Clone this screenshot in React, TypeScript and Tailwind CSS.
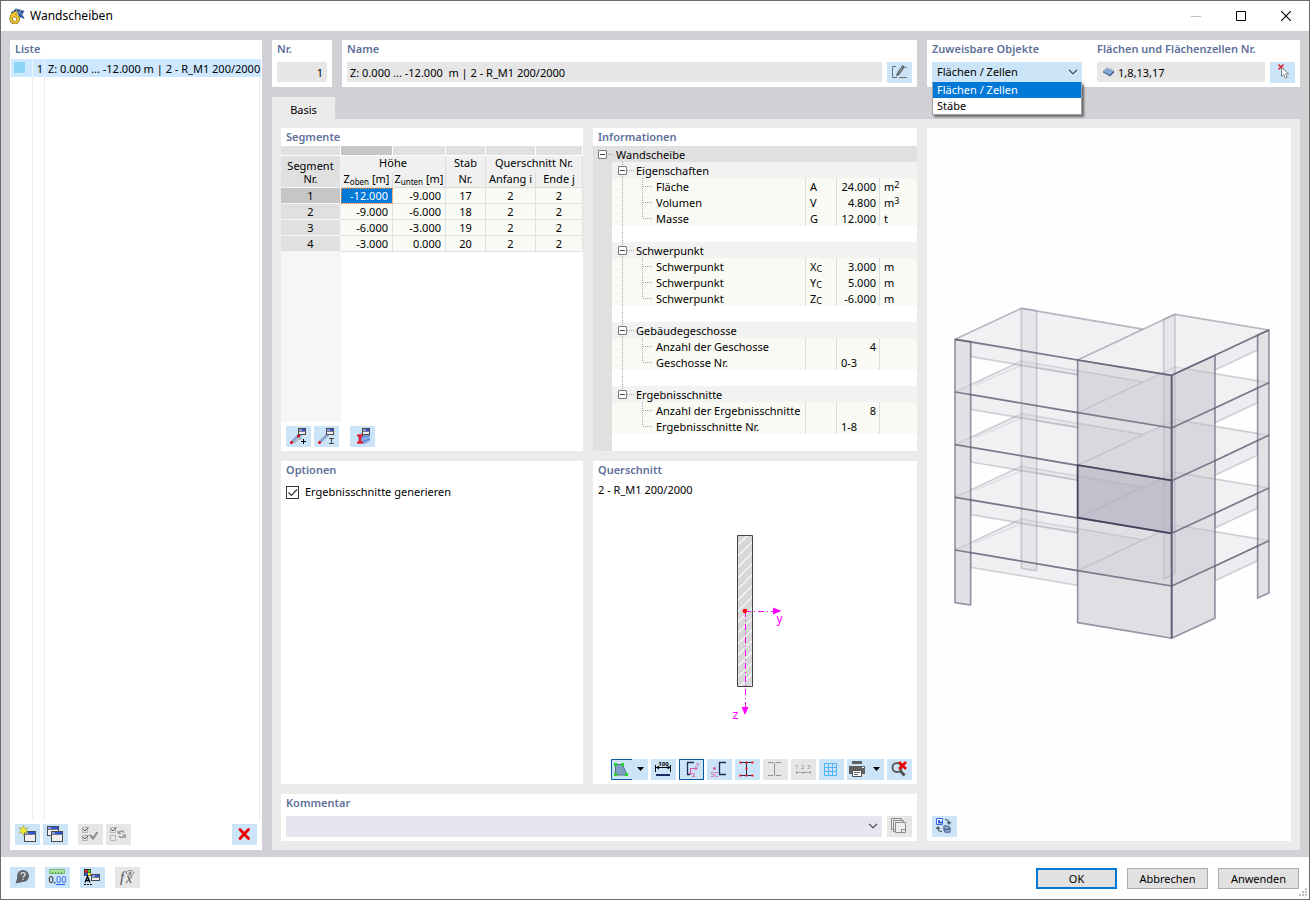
import type { ReactNode } from "react";
import { clsx } from "clsx";

type IconButtonProps = {
  label: string;
  children: ReactNode;
  disabled?: boolean;
  active?: boolean;
};

function IconButton({ label, children, disabled, active }: IconButtonProps) {
  return (
    <button
      type="button"
      aria-label={label}
      disabled={disabled}
      className={clsx(
        "block h-[21px] w-[25px] shrink-0",
        disabled ? "bg-[#e6e6e6]" : "bg-[#cce4f7]",
        active && "outline outline-1 -outline-offset-1 outline-[#0a5ba6]"
      )}
    >
      <svg viewBox="0 0 25 21" className="block h-[21px] w-[25px]" fill="none" aria-hidden>
        {children}
      </svg>
    </button>
  );
}

function SplitButton({ label, children, active }: IconButtonProps) {
  return (
    <button type="button" aria-label={label} className="flex h-[21px] w-[37px] shrink-0 bg-[#cce4f7]">
      <svg viewBox="0 0 37 21" className="block h-[21px] w-[37px]" fill="none" aria-hidden>
        {children}
        <path d="M26 8h7l-3.5 4z" fill="#000" />
        {active && <path d="M21 .5H.5v20H21" stroke="#0a5ba6" />}
      </svg>
    </button>
  );
}

function Heading({ children }: { children: ReactNode }) {
  return <h2 className="px-[5px] text-[11px] leading-[18px] font-semibold whitespace-nowrap text-[#60709a]">{children}</h2>;
}

function Chevron() {
  return (
    <svg viewBox="0 0 10 6" className="pointer-events-none absolute right-[4px] top-[7px] h-[6px] w-[10px]" fill="none" aria-hidden>
      <path d="M1 .8l4 4 4-4" stroke="#333" strokeWidth="1.1" />
    </svg>
  );
}

/* small window with a blue title bar, shared by several icons */
function MiniWindow({ x, y, w = 10, h = 9 }: { x: number; y: number; w?: number; h?: number }) {
  return (
    <g>
      <rect x={x + 0.5} y={y + 0.5} width={w} height={h} fill="#f1f1f1" stroke="#4a4a4a" />
      <rect x={x + 1} y={y + 1} width={w - 1} height="2" fill="#2f55dd" />
      <rect x={x + 1} y={y + 1} width="3" height="2" fill="#8a9be0" />
      <path d={`M${x} ${y + 3.5}h${w + 1}`} stroke="#5d5d66" strokeWidth=".8" />
    </g>
  );
}

function TitleBar() {
  return (
    <header className="flex h-[30px] items-center bg-white pl-[8px]">
      <svg viewBox="0 0 16 16" className="h-[16px] w-[16px]" fill="none" aria-hidden>
        <path d="M1.500 5L7 .5l8.500 2.500L13.500 6l2 5-5-2-2-4z" fill="#2f5891" />
        <path d="M4 3.500l7 1 3 4M8 1l-1 3M12 2l-2 3" stroke="#8fb0dc" strokeWidth=".8" />
        <path d="M8 4.300C4 5 2.200 7.500 2.200 11a3.500 3.500 0 1 0 3.500-3.400c-1.500 0-2.500 1-3 2" stroke="#6b5616" strokeWidth="3.400" />
        <path d="M8 4.300C4 5 2.200 7.500 2.200 11a3.500 3.500 0 1 0 3.500-3.400c-1.500 0-2.500 1-3 2" stroke="#f3c62c" strokeWidth="2.200" />
      </svg>
      <h1 className="ml-[5px] flex-1 text-[12px] text-black">Wandscheiben</h1>
      <button type="button" aria-label="Minimieren" className="grid h-[29px] w-[46px] place-items-center">
        <svg viewBox="0 0 10 10" className="h-[10px] w-[10px]" aria-hidden>
          <path d="M0 5.500h10" stroke="#c4c4c4" />
        </svg>
      </button>
      <button type="button" aria-label="Maximieren" className="grid h-[29px] w-[44px] place-items-center">
        <svg viewBox="0 0 10 10" className="h-[10px] w-[10px]" fill="none" aria-hidden>
          <path d="M.5.5h9v9h-9z" stroke="#000" />
        </svg>
      </button>
      <button type="button" aria-label="Schließen" className="grid h-[29px] w-[46px] place-items-center">
        <svg viewBox="0 0 10 10" className="h-[10px] w-[10px]" fill="none" aria-hidden>
          <path d="M0 0l10 10M10 0L0 10" stroke="#000" strokeWidth="1.100" />
        </svg>
      </button>
    </header>
  );
}

function ListPanel() {
  return (
    <aside className="flex w-[252px] shrink-0 flex-col bg-white">
      <Heading>Liste</Heading>
      <div className="mx-px mt-px flex flex-1 flex-col">
        <div className="flex h-[18px] items-stretch bg-[#cde8ff] leading-[19px]">
          <div className="w-[21px] px-[3px] pt-[3px]">
            <div className="h-[11px] w-[11px] bg-[#8dd5f4]" />
          </div>
          <div className="w-[12px] border-l border-white/60 pr-[1px] text-right">1</div>
          <div className="flex-1 whitespace-nowrap border-l border-white/60 pl-[3px]">
            Z: 0.000 ... -12.000 m | 2 - R_M1 200/2000
          </div>
        </div>
        <div className="flex flex-1">
          <div className="w-[21px]" />
          <div className="w-[12px] border-l border-[#ebebeb]" />
          <div className="mr-px flex-1 border-x border-[#ebebeb]" />
        </div>
      </div>
      <div className="flex items-center gap-[3px] px-[5px] pt-[5px] pb-[5px]">
        <IconButton label="Neu">
          <MiniWindow x={9} y={7} w={11} h={10} />
          <path d="M8.500 1.500l1.200 3.200 3.300-1-2.200 2.800 2.200 2.500-3.300-.8-1.200 3.300-1.200-3.300-3.300.8 2.200-2.500L4 3.700l3.300 1z" fill="#f7ef2d" stroke="#a8a03b" strokeWidth=".6" />
        </IconButton>
        <IconButton label="Kopieren">
          <MiniWindow x={4} y={2} w={11} h={9} />
          <MiniWindow x={8} y={7} w={11} h={10} />
        </IconButton>
        <span className="w-[4px]" />
        <IconButton label="Alle auswählen" disabled>
          <path d="M4.500 3.500h5v5h-5zM4.500 11.500h5v5h-5z" stroke="#b5b5b5" />
          <path d="M5 5l2 2 3.500-4M5 13l2 2 3.500-4" stroke="#555" />
          <path d="M12 11l3 3.500 4.500-6.500" stroke="#8a8a8a" strokeWidth="2" />
        </IconButton>
        <IconButton label="Auswahl umkehren" disabled>
          <path d="M4.500 3.500h5v5h-5z" stroke="#b5b5b5" />
          <path d="M4.500 11.500h5v5h-5z" stroke="#b5b5b5" />
          <path d="M5 5l2 2 3.500-4" stroke="#555" />
          <path d="M18 8.500c-1.500-2-3.500-2-5 0M13 12c1.500 2 3.500 2 5.500 0" stroke="#969696" strokeWidth="1.600" />
          <path d="M11.500 6v4h4zM20 14.500v-4h-4z" fill="#969696" />
        </IconButton>
        <span className="flex-1" />
        <IconButton label="Löschen">
          <path d="M8 5.500l8.500 9M16.500 5.500L8 14.500" stroke="#f00000" strokeWidth="2.800" strokeLinecap="round" />
        </IconButton>
      </div>
    </aside>
  );
}

function TopFields() {
  return (
    <div className="grid h-[47px] grid-cols-[60px_minmax(0,575fr)_minmax(0,373fr)] gap-[10px]">
      <section className="bg-white">
        <Heading>
          <label htmlFor="nr">Nr.</label>
        </Heading>
        <div className="px-[5px] pt-[4px]">
          <input id="nr" readOnly defaultValue="1" className="block h-[20px] w-full bg-[#e6e6e6] px-[4px] text-right" />
        </div>
      </section>

      <section className="bg-white">
        <Heading>
          <label htmlFor="name">Name</label>
        </Heading>
        <div className="flex gap-[5px] px-[5px] pt-[4px]">
          <input
            id="name"
            readOnly
            defaultValue="Z: 0.000 ... -12.000  m | 2 - R_M1 200/2000"
            className="block h-[20px] min-w-0 flex-1 bg-[#e6e6e6] px-[3px]"
          />
          <IconButton label="Name bearbeiten">
            <path d="M9 4.500H5.500v11H10M12 15.500h8M18 5.500h2" stroke="#6d7478" />
            <path d="M9 14.500l1-3.500 5.500-8 2.500 1.700-5.500 8z" fill="#5f666a" />
            <path d="M11.500 11.500l4-6" stroke="#9aa2a6" />
          </IconButton>
        </div>
      </section>

      <section className="flex gap-[10px] bg-white">
        <div className="w-[155px] shrink-0">
          <Heading>
            <label htmlFor="objects">Zuweisbare Objekte</label>
          </Heading>
          <div className="relative ml-[5px] mt-[4px]">
            <select id="objects" defaultValue="cells" className="block h-[20px] w-full appearance-none bg-[#cce4f7] px-[5px]">
              <option value="cells">Flächen / Zellen</option>
              <option value="members">Stäbe</option>
            </select>
            <Chevron />
            <ul
              role="listbox"
              aria-label="Zuweisbare Objekte"
              className="absolute top-full left-0 z-10 w-full border border-t-0 border-[#a0a0a0] bg-white leading-[16px] shadow-[2px_2px_2px_rgba(0,0,0,0.5)]"
            >
              <li role="option" aria-selected="true" className="bg-[#0078d7] px-[4px] text-white">
                Flächen / Zellen
              </li>
              <li role="option" aria-selected="false" className="px-[4px]">
                Stäbe
              </li>
            </ul>
          </div>
        </div>
        <div className="min-w-0 flex-1">
          <Heading>
            <label htmlFor="surfaces">Flächen und Flächenzellen Nr.</label>
          </Heading>
          <div className="flex gap-[5px] px-[5px] pt-[4px]">
            <div className="flex h-[20px] min-w-0 flex-1 items-center bg-[#e6e6e6] pl-[6px]">
              <svg viewBox="0 0 11 10" className="h-[10px] w-[11px] shrink-0" aria-hidden>
                <path d="M0 4l4-3.500L11 3.500 7 7.500z" fill="#86a9d6" />
                <path d="M0 4l7 3.500v2L0 5.500z" fill="#55749f" />
                <path d="M7 7.500l4-4v2l-4 4z" fill="#3e5a85" />
              </svg>
              <input id="surfaces" readOnly defaultValue="1,8,13,17" className="h-[20px] w-full min-w-0 px-[4px]" />
            </div>
            <IconButton label="Flächen in Grafik auswählen">
              <path d="M8.500 2.500l5 5M13.500 2.500l-5 5" stroke="#e3242b" strokeWidth="1.600" />
              <path d="M11.500 5.500v9l2.200-2 1.500 3.700 2-.8-1.600-3.600h3z" fill="#fff" stroke="#777" strokeWidth=".9" />
            </IconButton>
          </div>
        </div>
      </section>
    </div>
  );
}

const segments = [
  { nr: 1, top: "-12.000", bottom: "-9.000", member: 17 },
  { nr: 2, top: "-9.000", bottom: "-6.000", member: 18 },
  { nr: 3, top: "-6.000", bottom: "-3.000", member: 19 },
  { nr: 4, top: "-3.000", bottom: "0.000", member: 20 },
];

function SegmentsPanel() {
  const cell = "h-[16px] border-r border-b border-[#e0e0e0] leading-[15px]";
  const plain = "bg-[#fafaf5]";
  return (
    <section className="flex flex-col bg-white">
      <Heading>Segmente</Heading>
      <table className="w-full table-fixed border-separate border-spacing-0 text-center">
        <colgroup>
          <col className="w-[60px]" />
          <col className="w-[52px]" />
          <col className="w-[53px]" />
          <col className="w-[40px]" />
          <col className="w-[50px]" />
          <col />
        </colgroup>
        <thead>
          <tr>
            {[0, 1, 2, 3, 4, 5].map((i) => (
              <td
                key={i}
                className={clsx("h-[10px] border-r border-b border-white p-0", i === 1 ? "bg-[#c6c6c6]" : "bg-[#e0e0e0]")}
              />
            ))}
          </tr>
          <tr className="leading-[14px] [&>th]:p-0 [&>th]:font-normal">
            <th rowSpan={2} className="border-r border-b border-[#f4f4f4] bg-[#e0e0e0] leading-[13px]">
              Segment
              <br />
              Nr.
            </th>
            <th colSpan={2} className="h-[16px] border-r border-[#dcdcdc] bg-[#f0f0f0] align-top">Höhe</th>
            <th className="border-r border-[#dcdcdc] bg-[#f0f0f0] align-top">Stab</th>
            <th colSpan={2} className="border-r border-[#dcdcdc] bg-[#f0f0f0] align-top whitespace-nowrap">Querschnitt Nr.</th>
          </tr>
          <tr className="leading-[14px] whitespace-nowrap [&>th]:h-[16px] [&>th]:border-r [&>th]:border-b [&>th]:border-[#dcdcdc] [&>th]:bg-[#f0f0f0] [&>th]:p-0 [&>th]:align-top [&>th]:font-normal">
            <th>
              Z<span className="relative top-[2px] text-[8px] leading-none">oben</span> [m]
            </th>
            <th>
              Z<span className="relative top-[2px] text-[8px] leading-none">unten</span> [m]
            </th>
            <th>Nr.</th>
            <th>Anfang i</th>
            <th>Ende j</th>
          </tr>
        </thead>
        <tbody>
          {segments.map((s, i) => (
            <tr key={s.nr}>
              <th
                scope="row"
                className={clsx(
                  "h-[16px] border-r border-b border-[#f4f4f4] p-0 leading-[15px] font-normal",
                  i === 0 ? "bg-[#c6c6c6]" : "bg-[#e0e0e0]"
                )}
              >
                {s.nr}
              </th>
              <td
                className={clsx(
                  cell,
                  "py-0 pr-[4px] text-right",
                  i === 0
                    ? "bg-[#0078d7] text-white outline-1 -outline-offset-1 outline-dotted outline-[#ff8728]"
                    : plain
                )}
              >
                {s.top}
              </td>
              <td className={clsx(cell, plain, "py-0 pr-[4px] text-right")}>{s.bottom}</td>
              <td className={clsx(cell, plain, "p-0")}>{s.member}</td>
              <td className={clsx(cell, plain, "p-0")}>2</td>
              <td className={clsx(cell, plain, "p-0")}>2</td>
            </tr>
          ))}
        </tbody>
      </table>
      <div className="w-[60px] flex-1 bg-[#f6f6f6]" />
      <div className="flex gap-[3px] px-[5px] py-[4px]">
        <IconButton label="Stab einfügen">
          <path d="M6 16L14 8" stroke="#8aa6cc" strokeWidth="3" />
          <path d="M8 17l5-4h3M16 8l-3 5" stroke="#9a9a9a" />
          <circle cx="5.500" cy="16.500" r="1.500" fill="#e1001a" />
          <circle cx="12.500" cy="10" r="1.500" fill="#e1001a" />
          <MiniWindow x={12} y={2} w={7} h={6} />
          <path d="M15 15.500h5M17.500 13v5" stroke="#000" />
        </IconButton>
        <IconButton label="Stab bearbeiten">
          <path d="M6 16L14 8" stroke="#8aa6cc" strokeWidth="3" />
          <circle cx="5.500" cy="16.500" r="1.500" fill="#e1001a" />
          <MiniWindow x={12} y={2} w={7} h={6} />
          <path d="M15 12.500h5M15 17.500h5M17.500 12.500v5" stroke="#444" />
        </IconButton>
        <span className="w-[5px]" />
        <IconButton label="Querschnitt bearbeiten">
          <path d="M8 9l5-3h7v9l-5 3H8z" fill="#86aae6" />
          <path d="M10 12l10-3M11 16l9-3" stroke="#5b82cf" />
          <MiniWindow x={12} y={2} w={7} h={6} />
          <path d="M7 9.500h6M7 16.500h6M10 9.500v7" stroke="#f0141e" strokeWidth="2" />
        </IconButton>
      </div>
    </section>
  );
}

type InfoRow = {
  label: string;
  symbol?: ReactNode;
  value: string;
  unit?: ReactNode;
  left?: boolean;
};

const subC = <span className="relative top-[1px] text-[9px] leading-none">C</span>;

const infoGroups: { title: string; rows: InfoRow[] }[] = [
  {
    title: "Eigenschaften",
    rows: [
      { label: "Fläche", symbol: "A", value: "24.000", unit: <>m<span className="relative -top-[3px] text-[9px] leading-none">2</span></> },
      { label: "Volumen", symbol: "V", value: "4.800", unit: <>m<span className="relative -top-[3px] text-[9px] leading-none">3</span></> },
      { label: "Masse", symbol: "G", value: "12.000", unit: "t" },
    ],
  },
  {
    title: "Schwerpunkt",
    rows: [
      { label: "Schwerpunkt", symbol: <>X{subC}</>, value: "3.000", unit: "m" },
      { label: "Schwerpunkt", symbol: <>Y{subC}</>, value: "5.000", unit: "m" },
      { label: "Schwerpunkt", symbol: <>Z{subC}</>, value: "-6.000", unit: "m" },
    ],
  },
  {
    title: "Gebäudegeschosse",
    rows: [
      { label: "Anzahl der Geschosse", value: "4" },
      { label: "Geschosse Nr.", value: "0-3", left: true },
    ],
  },
  {
    title: "Ergebnisschnitte",
    rows: [
      { label: "Anzahl der Ergebnisschnitte", value: "8" },
      { label: "Ergebnisschnitte Nr.", value: "1-8", left: true },
    ],
  },
];

function TreeLines({ d, box, wide }: { d: string; box?: boolean; wide?: boolean }) {
  return (
    <svg viewBox={wide ? "0 0 44 16" : "0 0 24 16"} className={clsx("block h-[16px] shrink-0", wide ? "w-[44px]" : "w-[24px]")} fill="none" aria-hidden>
      <path d={d} stroke="#a8a8a8" strokeDasharray="1 1" />
      {box && (
        <>
          <path d="M6.500 4.500h8v8h-8z" fill="#fff" stroke="#7a7a7a" />
          <path d="M8 8.500h5" stroke="#444" />
        </>
      )}
    </svg>
  );
}

function InfoPanel() {
  return (
    <section className="flex flex-col bg-white">
      <Heading>Informationen</Heading>
      <table className="w-full table-fixed border-collapse leading-[18px] whitespace-nowrap [&_td]:p-0">
        <colgroup>
          <col className="w-[19px]" />
          <col />
          <col className="w-[31px]" />
          <col className="w-[43px]" />
          <col className="w-[38px]" />
        </colgroup>
        <tbody>
          <tr className="h-[16px] bg-[#e0e0e0]">
            <td colSpan={5}>
              <div className="flex h-[16px]">
                <svg viewBox="0 0 23 16" className="block h-[16px] w-[23px]" fill="none" aria-hidden>
                  <path d="M5.500 4.500h8v8h-8z" fill="#fff" stroke="#7a7a7a" />
                  <path d="M7 8.500h5" stroke="#444" />
                  <path d="M15 8.500h6" stroke="#a8a8a8" strokeDasharray="1 1" />
                </svg>
                Wandscheibe
              </div>
            </td>
          </tr>
        </tbody>
        {infoGroups.map((group, g) => {
          const last = g === infoGroups.length - 1;
          return (
            <tbody key={group.title}>
              <tr className="h-[16px]">
                <td className="bg-[#e0e0e0]" />
                <td colSpan={4} className="bg-[#f2f2f2]">
                  <div className="flex h-[16px]">
                    <TreeLines box d={last ? "M10.500 0v8M15 8.500h7" : "M10.500 0v16M15 8.500h7"} />
                    {group.title}
                  </div>
                </td>
              </tr>
              {group.rows.map((row, i) => {
                const end = i === group.rows.length - 1;
                const branch = end ? "M30.500 0v8M31 8.500h10" : "M30.500 0v16M31 8.500h10";
                return (
                  <tr key={i} className="h-[16px] bg-[#fafaf5]">
                    <td className="bg-[#e0e0e0]" />
                    <td>
                      <div className="flex h-[16px]">
                        <TreeLines wide d={last ? branch : `M10.500 0v16${branch}`} />
                        {row.label}
                      </div>
                    </td>
                    <td>
                      <div className="h-[16px] border-l border-[#dcdcdc] pl-[4px]">{row.symbol}</div>
                    </td>
                    <td>
                      <div className={clsx("h-[16px] border-l border-[#dcdcdc] pr-[3px] pl-[4px]", !row.left && "text-right")}>{row.value}</div>
                    </td>
                    <td>
                      <div className="h-[16px] border-l border-[#dcdcdc] pl-[4px]">{row.unit}</div>
                    </td>
                  </tr>
                );
              })}
              {!last && (
                <tr className="h-[16px]">
                  <td className="bg-[#e0e0e0]" />
                  <td colSpan={4}>
                    <TreeLines d="M10.500 0v16" />
                  </td>
                </tr>
              )}
            </tbody>
          );
        })}
      </table>
      <div className="w-[19px] flex-1 bg-[#e0e0e0]" />
    </section>
  );
}

function OptionsPanel() {
  return (
    <section className="bg-white">
      <Heading>Optionen</Heading>
      <label className="mt-[4px] ml-[5px] flex h-[18px] w-fit items-center gap-[6px]">
        <span className="relative block h-[13px] w-[13px]">
          <input type="checkbox" defaultChecked className="peer block h-[13px] w-[13px] appearance-none border border-[#333] bg-white" />
          <svg viewBox="0 0 13 13" className="pointer-events-none absolute inset-0 hidden peer-checked:block" fill="none" aria-hidden>
            <path d="M2.500 6.500l3 3 5.500-6" stroke="#333" strokeWidth="1.200" />
          </svg>
        </span>
        Ergebnisschnitte generieren
      </label>
    </section>
  );
}

const hatchLines = Array.from({ length: 15 }, (_, i) => 529 + i * 11);

function CrossSectionPanel() {
  return (
    <section className="flex flex-col bg-white">
      <Heading>Querschnitt</Heading>
      <p className="mt-[3px] px-[5px] leading-[16px]">2 - R_M1 200/2000</p>
      <svg viewBox="593 498 324 258" className="min-h-0 w-full flex-1" fill="none" role="img" aria-label="Querschnitt">
        <clipPath id="section">
          <path d="M738 536h14v150h-14z" />
        </clipPath>
        <path d="M737.500 535.500h15v151h-15z" fill="#d8d8d8" stroke="#444" />
        <g clipPath="url(#section)" stroke="#fff" strokeWidth="1.200">
          {hatchLines.map((y) => (
            <path key={y} d={`M737 ${y + 17}l16-16`} />
          ))}
        </g>
        <path d="M745 611.500h29" stroke="#f0f" strokeDasharray="6 3 1 3" />
        <path d="M745.500 611v96" stroke="#f0f" strokeDasharray="6 3 1 3" />
        <path d="M773 607.500l8.500 3.500-8.500 3.500zM741.500 707h7l-3.500 8z" fill="#f0f" />
        <circle cx="745" cy="611" r="2.300" fill="#f00" />
        <text x="776.500" y="623" fontSize="12" fill="#f0f" className="font-['Liberation_Sans',sans-serif]">y</text>
        <text x="732.500" y="719" fontSize="12" fill="#f0f" className="font-['Liberation_Sans',sans-serif]">z</text>
      </svg>
      <div className="flex justify-end gap-[3px] px-[5px] pt-[3px] pb-[4px]">
        <SplitButton label="Spannungspunkte" active>
          <path d="M4.500 5.500h7L16 16H4.500z" fill="#7fa0c0" stroke="#4c6e8f" />
          <path d="M3 4h3v3H3zM10 4h3v3h-3zM3 14h3v3H3zM14 14h3v3h-3z" fill="#29d12b" />
        </SplitButton>
        <IconButton label="Abmessungen">
          <path d="M5 8.500h15M4.500 6v7M19.500 6v7" stroke="#000" />
          <path d="M5 8.500l3-2v4zM19.500 8.500l-3-2v4z" fill="#000" />
          <path d="M5 15h14v2H5z" fill="#1d2d66" />
          <text x="12.500" y="6.500" fontSize="6" fontWeight="bold" textAnchor="middle" fill="#000">100</text>
        </IconButton>
        <IconButton label="Hauptachsen" active>
          <path d="M15 3.500H8.500v12H11" stroke="#1d2d55" strokeWidth="1.300" />
          <path d="M11 9.500h7M11.500 9v6M16 7.500l2 2-2 2M9.500 13.500l2 2 2-2" stroke="#d6589f" />
          <path d="M17 4l1.500 2M20 4l-2 4M13.500 15h2.500l-2.500 2.500H16" stroke="#d6589f" strokeWidth=".8" />
        </IconButton>
        <IconButton label="Schubmittelpunkt">
          <path d="M19 3.500h-6.500v12H19" stroke="#1d2d55" strokeWidth="1.300" />
          <circle cx="7.500" cy="9.500" r="1.400" fill="#d6589f" />
          <text x="3.500" y="18" fontSize="7" fill="#d6589f">SC</text>
        </IconButton>
        <IconButton label="Profilpunkte">
          <path d="M5 3.500h13M5 16.500h13M11.500 3.500v13" stroke="#1d2d55" />
          <path d="M4.500 2.500h2v2h-2zM16.500 2.500h2v2h-2zM4.500 15.500h2v2h-2zM16.500 15.500h2v2h-2zM10.500 8.500h2v2h-2zM10.500 2.500h2v2h-2zM10.500 15.500h2v2h-2z" fill="#f21616" />
        </IconButton>
        <IconButton label="Profil" disabled>
          <path d="M5 3.500h5.500M12.500 3.500H18M5 16.500h5.500M12.500 16.500H18M11.500 4v12" stroke="#909090" />
        </IconButton>
        <IconButton label="Nummerierung" disabled>
          <path d="M5 13.500h15M5.500 12v3M12.500 12v3M19.500 12v3" stroke="#a2a2a2" />
          <text x="4" y="10" fontSize="6" fill="#8d8d8d">1</text>
          <text x="10" y="10" fontSize="6" fill="#8d8d8d">2</text>
          <text x="16" y="10" fontSize="6" fill="#8d8d8d">3</text>
        </IconButton>
        <IconButton label="Raster">
          <path d="M5.500 4.500h12v12h-12zM9.500 4.500v12M13.500 4.500v12M5.500 8.500h12M5.500 12.500h12" stroke="#4fb4f5" />
        </IconButton>
        <SplitButton label="Drucken">
          <path d="M5 2h10v3H5z" fill="#606060" />
          <path d="M2 7h16v8H2z" fill="#606060" />
          <path d="M5.500 11.500h9v6h-9z" fill="#fff" stroke="#505050" />
          <path d="M7 13.500h6M7 15.500h4" stroke="#666" />
          <path d="M15 8h2v1h-2z" fill="#fff" />
        </SplitButton>
        <IconButton label="Ansicht zurücksetzen">
          <circle cx="10" cy="8.500" r="4.500" stroke="#606060" strokeWidth="2" />
          <path d="M13 11.500l4.500 5" stroke="#505050" strokeWidth="2.800" />
          <path d="M12 3l7 7M19 3l-7 7" stroke="#f00000" strokeWidth="2.600" />
        </IconButton>
      </div>
    </section>
  );
}

function CommentPanel() {
  return (
    <section className="col-span-2 bg-white">
      <Heading>
        <label htmlFor="comment">Kommentar</label>
      </Heading>
      <div className="flex gap-[5px] px-[5px] pt-[4px]">
        <div className="relative min-w-0 flex-1">
          <select id="comment" className="block h-[21px] w-full appearance-none bg-[#e6e6f0] px-[4px]">
            <option value="" />
          </select>
          <Chevron />
        </div>
        <IconButton label="Kommentare verwalten" disabled>
          <path d="M7.500 13.500h-3v-11h10v2M10 15.500H6.500v-11h10v2" stroke="#8c8c8c" />
          <path d="M8.500 6.500h10v10h-10z" fill="#eee" stroke="#8c8c8c" />
          <path d="M14.500 16.500v-3h4" stroke="#8c8c8c" />
        </IconButton>
      </div>
    </section>
  );
}

const storeys = [0, 158, 316, 474, 632];

/* isometric model of the building, storeys are stacked from the roof down */
function BuildingModel() {
  return (
    <svg viewBox="927 128 364 688" className="min-h-0 w-full flex-1" fill="none" role="img" aria-label="Gebäudemodell">
      <g transform="translate(945 300) scale(0.3333)" strokeWidth="5" strokeLinejoin="round">
        {[...storeys].reverse().map((dy) => (
          <g key={dy} transform={`translate(0 ${dy})`}>
            <path d="M30 118L229 25l368 63 93-45 282 47-292 136z" fill="#e4e4ea" fillOpacity=".5" />
            <path d="M30 118L229 25l368 63M398 180L690 43l282 47" stroke="#77768a" strokeOpacity={dy === 0 ? 0.5 : 0.32} />
            {dy > 0 && <path d="M90 97l139-59 169 29" stroke="#77768a" strokeOpacity=".15" />}
            <path d="M77 125l321 55v44L77 170z" fill="#dcdbe3" fillOpacity=".4" stroke="#77768a" strokeOpacity=".3" />
            <path d="M810 166l128-61v45l-128 60z" fill="#dcdbe3" fillOpacity=".5" stroke="#77768a" strokeOpacity=".3" />
          </g>
        ))}
        <path d="M229 25l46 7v780l-46-7zM656 58l34-15v780l-34 13z" fill="#d0cfd8" fillOpacity=".35" stroke="#77768a" strokeOpacity=".3" />
        <path d="M398 180l282 46v789l-282-47zM680 226l130-60v789l-130 60z" fill="#c0c0c9" fillOpacity=".5" stroke="#77768a" strokeOpacity=".75" />
        <path d="M30 118l47 7v790l-47-7zM938 105l34-15v789l-34 15z" fill="#cfced6" fillOpacity=".6" stroke="#77768a" strokeOpacity=".75" />
        {storeys.map((dy) => (
          <path key={dy} transform={`translate(0 ${dy})`} d="M30 118l368 62 282 46 130-60 162-76" stroke="#5c5b70" strokeOpacity=".75" />
        ))}
        <path d="M398 495l282 46v159l-282-47z" fill="#adafbd" fillOpacity=".55" stroke="#45445c" />
        <path d="M680 226v789" stroke="#5c5b70" />
      </g>
    </svg>
  );
}

function PreviewPanel() {
  return (
    <section className="row-span-3 flex flex-col bg-[#fefefe]">
      <BuildingModel />
      <div className="px-[5px] pb-[4px]">
        <IconButton label="Ansicht wechseln">
          <path d="M4.500 2.500h6v6h-6z" fill="#fff" stroke="#3d63dc" />
          <path d="M6 4h2v1.500h2V7.500H6z" fill="#3d63dc" />
          <path d="M13 3.500c3 0 4 1 4 3M10 15.500c-3 0-4-1-4-3" stroke="#4d5560" strokeWidth="1.200" />
          <path d="M14.500 6h5L17 9zM3.500 13h5L6 10z" fill="#4d5560" />
          <path d="M12 9l5 1 2 2-1 5-6-1-1-3z" fill="#5f7ba8" />
          <path d="M12 9.500l5 1v3l-5-1zM13 14l5-1v3l-5 .5z" fill="#8fa9cf" stroke="#496288" strokeWidth=".7" />
        </IconButton>
      </div>
    </section>
  );
}

function Footer() {
  const button = "h-[21px] w-[81px] bg-[#e1e1e1] text-center leading-[17px] text-black";
  return (
    <footer className="flex h-[42px] bg-white pr-[9px] pl-[9px]">
      <div className="flex flex-1 gap-[10px] pt-[10px]">
        <IconButton label="Hilfe">
          <circle cx="13" cy="9" r="6" fill="#606468" />
          <path d="M5.500 16.500l2-6.500 5 5z" fill="#606468" />
          <path d="M11 7.500c0-2.500 4.200-2.500 4.200 0 0 1.500-2.100 1.500-2.100 3M13.100 11.700v1.400" stroke="#dce9f5" strokeWidth="1.300" />
        </IconButton>
        <IconButton label="Einheiten">
          <path d="M4.500 2.500h15v4h-15z" fill="#a9dea0" stroke="#79bf70" />
          <path d="M7.500 5v2M10.500 5v2M13.500 5v2M16.500 5v2" stroke="#5ba350" />
          <text x="3.500" y="16" fontSize="9" fill="#000">0,</text>
          <text x="11" y="16" fontSize="9" fill="#2563eb">00</text>
          <path d="M11 17.500h9" stroke="#2563eb" />
        </IconButton>
        <IconButton label="Darstellung">
          <path d="M4 2h7v7H4z" fill="#333" />
          <path d="M5 3h2.500v2.500H5z" fill="#f22" />
          <path d="M8 3h2.500v2.500H8z" fill="#3c3" />
          <path d="M5 6h2.500v2.500H5z" fill="#36f" />
          <path d="M8 6h2.500v2.500H8z" fill="#fe2" />
          <path d="M5 15.500l2.500-6 2.500 6M6 13.500h3" stroke="#000" strokeWidth="1.300" />
          <path d="M4 17.500h8" stroke="#000" strokeDasharray="2 1" />
          <MiniWindow x={11} y={7} w={8} h={6} />
        </IconButton>
        <IconButton label="Formel" disabled>
          <text x="5" y="15" fontSize="15" fontStyle="italic" fill="#555" className="font-['Liberation_Serif',serif]">f</text>
          <text x="11" y="16" fontSize="14" fontStyle="italic" fill="#555" className="font-['Liberation_Serif',serif]">x</text>
          <path d="M11 6c2-3.500 6-3.500 8 0-2 3-6 3-8 0z" stroke="#888" />
          <circle cx="15" cy="6" r="1.500" fill="#888" />
        </IconButton>
      </div>
      <div className="flex gap-[10px] pt-[11px]">
        <button type="button" className={clsx(button, "border-2 border-[#0078d7]")}>OK</button>
        <button type="button" className={clsx(button, "border border-[#adadad]")}>Abbrechen</button>
        <button type="button" className={clsx(button, "border border-[#adadad]")}>Anwenden</button>
      </div>
      <svg viewBox="0 0 9 9" className="-mr-[8px] mb-[2px] h-[9px] w-[9px] self-end" aria-hidden>
        <path d="M6 0h2v2H6zM3 3h2v2H3zM6 3h2v2H6zM0 6h2v2H0zM3 6h2v2H3zM6 6h2v2H6z" fill="#bfbfbf" />
      </svg>
    </footer>
  );
}

export default function App() {
  return (
    <div className="flex min-h-screen flex-col border border-[#6b6b6b] bg-white font-['Noto_Sans','Open_Sans',sans-serif] text-[11px] text-black">
      <TitleBar />
      <div className="flex flex-1 gap-[10px] bg-[#d1d0d5] px-[9px] pt-[9px] pb-[7px]">
        <ListPanel />
        <main className="flex min-w-0 flex-1 flex-col">
          <TopFields />
          <div role="tablist" className="mt-[10px] flex">
            <button type="button" role="tab" aria-selected="true" className="h-[22px] w-[63px] bg-[#ebebeb] pt-[4px]">
              Basis
            </button>
          </div>
          <div className="grid flex-1 grid-cols-[minmax(0,302fr)_minmax(0,324fr)_minmax(0,364fr)] grid-rows-[1fr_1fr_47px] gap-[10px] bg-[#ebebeb] px-[9px] pt-[9px] pb-[9px]">
            <SegmentsPanel />
            <InfoPanel />
            <PreviewPanel />
            <OptionsPanel />
            <CrossSectionPanel />
            <CommentPanel />
          </div>
        </main>
      </div>
      <Footer />
    </div>
  );
}
